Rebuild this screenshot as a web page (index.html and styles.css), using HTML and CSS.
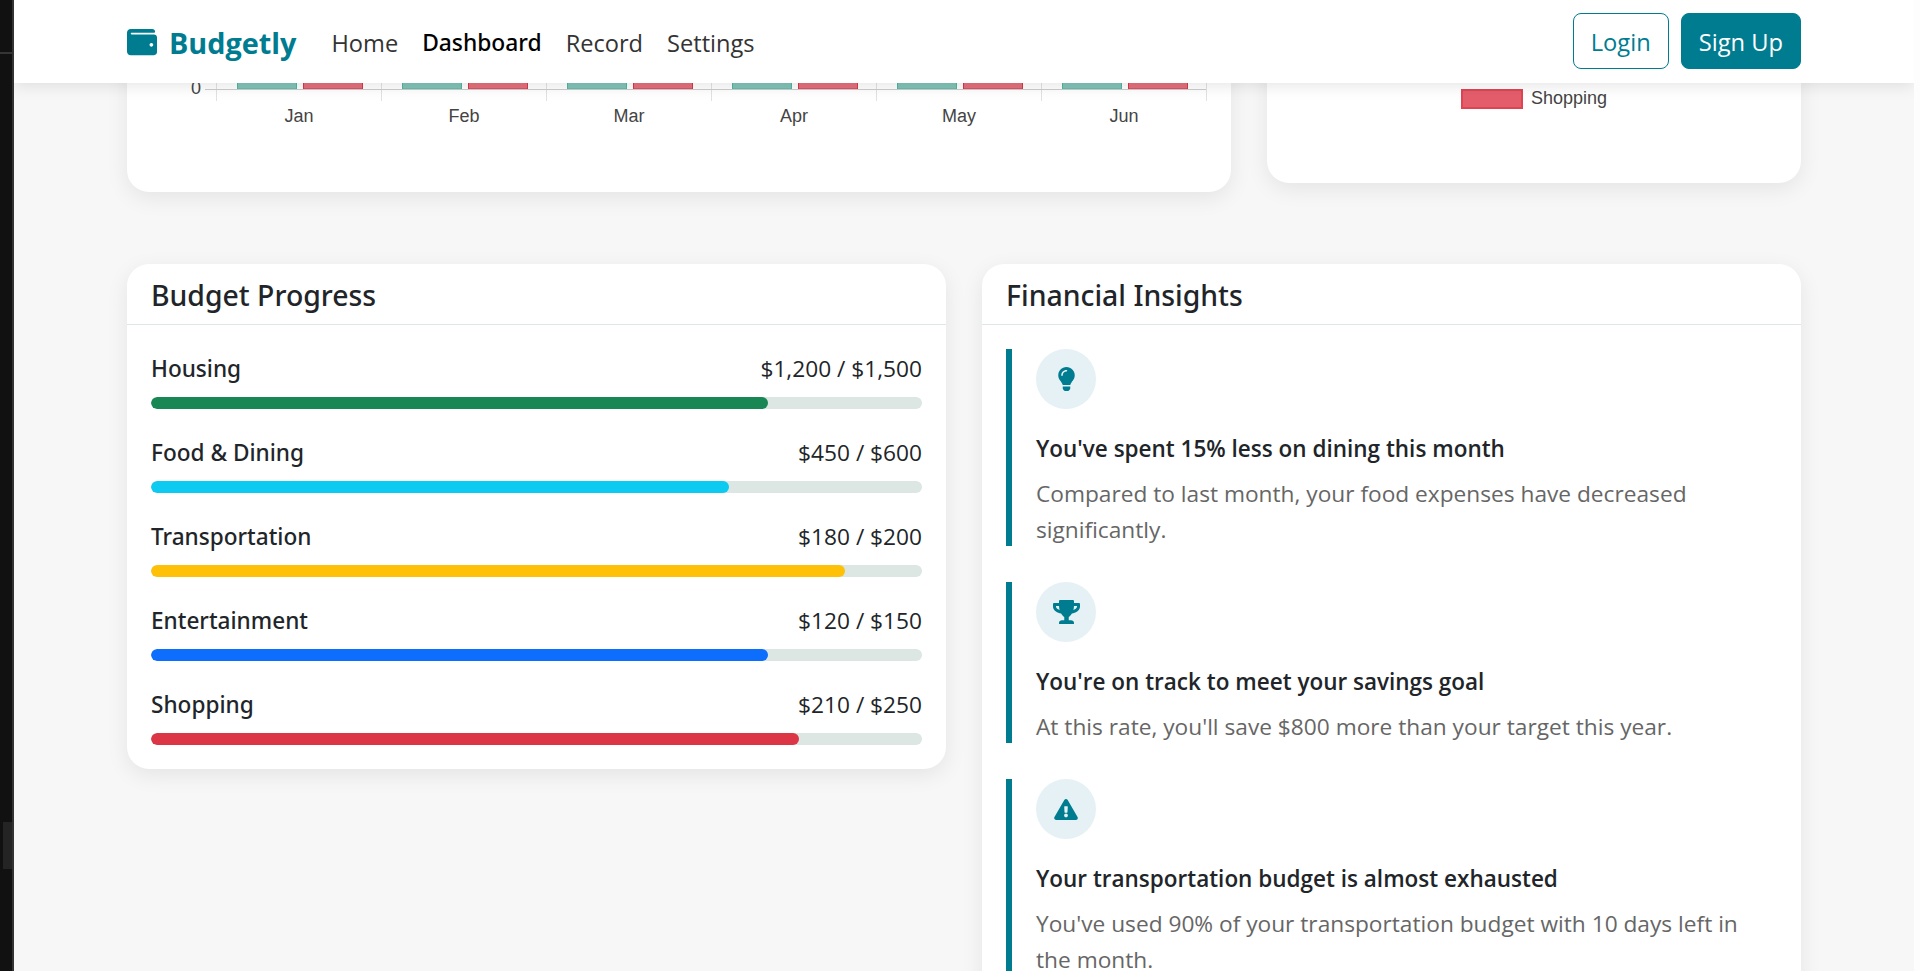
FILE: index.html
```html
<!DOCTYPE html>
<html lang="en">
<head>
    <meta charset="UTF-8">
    <meta name="viewport" content="width=device-width, initial-scale=1.0">
    <title>Budgetly - Dashboard</title>
    <link rel="stylesheet" href="styles.css">
</head>
<body>
    <div class="side-strip"></div>
    <div class="page">
        <nav class="navbar">
            <a class="brand" href="#">
                <svg class="brand-icon" viewBox="0 0 512 512"><path d="M461.2 128H80c-8.84 0-16-7.16-16-16s7.16-16 16-16h384c8.84 0 16-7.16 16-16 0-26.51-21.49-48-48-48H64C28.65 32 0 60.65 0 96v320c0 35.35 28.65 64 64 64h397.2c28.02 0 50.8-21.53 50.8-48V176c0-26.47-22.78-48-50.8-48zM416 336c-17.67 0-32-14.33-32-32s14.33-32 32-32 32 14.33 32 32-14.33 32-32 32z"/></svg>
                <span class="brand-name">Budgetly</span>
            </a>
            <div class="nav-links">
                <a href="#">Home</a>
                <a href="#" class="active">Dashboard</a>
                <a href="#">Record</a>
                <a href="#">Settings</a>
            </div>
            <div class="nav-buttons">
                <a href="#" class="btn btn-outline">Login</a>
                <a href="#" class="btn btn-solid">Sign Up</a>
            </div>
        </nav>

        <main class="content">
            <div class="chart-row">
                <section class="card chart-card">
                    <svg class="bar-chart" viewBox="0 0 1104 112" width="1104" height="112">
                        <g class="grid">
                            <path d="M89.5 0V21M254.5 0V21M419.5 0V21M584.5 0V21M749.5 0V21M914.5 0V21M1079.5 0V21"/>
                        </g>
                        <g class="bars-income">
                            <rect x="110.5" y="0" width="59" height="9"/>
                            <rect x="275.5" y="0" width="59" height="9"/>
                            <rect x="440.5" y="0" width="59" height="9"/>
                            <rect x="605.5" y="0" width="59" height="9"/>
                            <rect x="770.5" y="0" width="59" height="9"/>
                            <rect x="935.5" y="0" width="59" height="9"/>
                        </g>
                        <g class="bars-expense">
                            <rect x="176.5" y="0" width="59" height="9"/>
                            <rect x="341.5" y="0" width="59" height="9"/>
                            <rect x="506.5" y="0" width="59" height="9"/>
                            <rect x="671.5" y="0" width="59" height="9"/>
                            <rect x="836.5" y="0" width="59" height="9"/>
                            <rect x="1001.5" y="0" width="59" height="9"/>
                        </g>
                        <path class="axis" d="M78 9.5H1079"/>
                        <text class="axis-zero" x="74" y="14">0</text>
                        <g class="months">
                            <text x="172" y="42">Jan</text>
                            <text x="337" y="42">Feb</text>
                            <text x="502" y="42">Mar</text>
                            <text x="667" y="42">Apr</text>
                            <text x="832" y="42">May</text>
                            <text x="997" y="42">Jun</text>
                        </g>
                    </svg>
                </section>
                <section class="card legend-card">
                    <div class="legend-item">
                        <span class="legend-swatch"></span>
                        <span class="legend-label">Shopping</span>
                    </div>
                </section>
            </div>

            <div class="detail-row">
                <section class="card">
                    <h5 class="card-header">Budget Progress</h5>
                    <div class="card-body">
                        <div class="budget-item">
                            <div class="budget-label"><span class="budget-name">Housing</span><span>$1,200 / $1,500</span></div>
                            <div class="progress"><div class="progress-bar bar-green" style="width: 80%"></div></div>
                        </div>
                        <div class="budget-item">
                            <div class="budget-label"><span class="budget-name">Food &amp; Dining</span><span>$450 / $600</span></div>
                            <div class="progress"><div class="progress-bar bar-cyan" style="width: 75%"></div></div>
                        </div>
                        <div class="budget-item">
                            <div class="budget-label"><span class="budget-name">Transportation</span><span>$180 / $200</span></div>
                            <div class="progress"><div class="progress-bar bar-yellow" style="width: 90%"></div></div>
                        </div>
                        <div class="budget-item">
                            <div class="budget-label"><span class="budget-name">Entertainment</span><span>$120 / $150</span></div>
                            <div class="progress"><div class="progress-bar bar-blue" style="width: 80%"></div></div>
                        </div>
                        <div class="budget-item">
                            <div class="budget-label"><span class="budget-name">Shopping</span><span>$210 / $250</span></div>
                            <div class="progress"><div class="progress-bar bar-red" style="width: 84%"></div></div>
                        </div>
                    </div>
                </section>

                <section class="card">
                    <h5 class="card-header">Financial Insights</h5>
                    <div class="card-body">
                        <div class="insight">
                            <div class="insight-icon">
                                <svg class="icon-bulb" viewBox="0 0 352 512"><path d="M96.06 454.35c.01 6.29 1.87 12.45 5.36 17.69l17.09 25.69a31.99 31.99 0 0 0 26.64 14.28h61.71a31.99 31.99 0 0 0 26.64-14.28l17.09-25.69a31.989 31.989 0 0 0 5.36-17.69l.04-38.35H96.01l.05 38.35zM0 176c0 44.37 16.45 84.85 43.56 115.78 16.52 18.85 42.36 58.23 52.21 91.45.04.26.07.52.11.78h160.24c.04-.26.07-.51.11-.78 9.85-33.22 35.69-72.6 52.21-91.45C335.55 260.85 352 220.37 352 176 352 78.61 272.91-.3 175.45 0 73.44.31 0 82.97 0 176zm176-80c-44.11 0-80 35.89-80 80 0 8.84-7.16 16-16 16s-16-7.16-16-16c0-61.76 50.24-112 112-112 8.84 0 16 7.16 16 16s-7.16 16-16 16z"/></svg>
                            </div>
                            <h6 class="insight-title">You've spent 15% less on dining this month</h6>
                            <p class="insight-text">Compared to last month, your food expenses have decreased significantly.</p>
                        </div>
                        <div class="insight">
                            <div class="insight-icon">
                                <svg class="icon-trophy" viewBox="0 0 576 512"><path d="M552 64H448V24c0-13.3-10.7-24-24-24H152c-13.3 0-24 10.7-24 24v40H24C10.7 64 0 74.7 0 88v56c0 35.7 22.5 72.4 61.9 100.7 31.5 22.7 69.8 37.1 110 41.7C203.3 338.5 240 360 240 360v72h-48c-35.3 0-64 20.7-64 56v12c0 6.6 5.4 12 12 12h296c6.6 0 12-5.4 12-12v-12c0-35.3-28.7-56-64-56h-48v-72s36.7-21.5 68.1-73.6c40.3-4.6 78.6-19 110-41.7 39.3-28.3 61.9-65 61.9-100.7V88c0-13.3-10.7-24-24-24zM99.3 192.8C74.9 175.2 64 155.6 64 144v-16h64.2c1 32.6 5.8 61.2 12.8 86.2-15.1-5.2-29.2-12.4-41.7-21.4zM512 144c0 16.1-17.7 36.1-35.3 48.8-12.5 9-26.7 16.2-41.8 21.4 7-25 11.8-53.6 12.8-86.2H512v16z"/></svg>
                            </div>
                            <h6 class="insight-title">You're on track to meet your savings goal</h6>
                            <p class="insight-text">At this rate, you'll save $800 more than your target this year.</p>
                        </div>
                        <div class="insight">
                            <div class="insight-icon">
                                <svg class="icon-warning" viewBox="0 0 576 512"><path d="M569.517 440.013C587.975 472.007 564.806 512 527.94 512H48.054c-36.937 0-59.999-40.055-41.577-71.987L246.423 23.985c18.467-32.009 64.72-31.951 83.154 0l239.94 416.028zM288 354c-25.405 0-46 20.595-46 46s20.595 46 46 46 46-20.595 46-46-20.595-46-46-46zm-43.673-165.346l7.418 136c.347 6.364 5.609 11.346 11.982 11.346h48.546c6.373 0 11.635-4.982 11.982-11.346l7.418-136c.375-6.874-5.098-12.654-11.982-12.654h-63.383c-6.884 0-12.356 5.78-11.981 12.654z"/></svg>
                            </div>
                            <h6 class="insight-title">Your transportation budget is almost exhausted</h6>
                            <p class="insight-text">You've used 90% of your transportation budget with 10 days left in the month.</p>
                        </div>
                    </div>
                </section>
            </div>
        </main>
    </div>
</body>
</html>
```
FILE: styles.css
```css
* {
    box-sizing: border-box;
}
html, body {
    height: 100%;
}
body {
    margin: 0;
    display: flex;
    overflow: hidden;
    background-color: #fdfdfd;
    color: #212529;
    font-family: "Open Sans", "Noto Sans", sans-serif;
    font-size: 22.7px;
    line-height: 36px;
}
a {
    text-decoration: none;
}

/* Bit of the dark window behind the browser */
.side-strip {
    flex: 0 0 14px;
    background:
        linear-gradient(#353535, #353535) 0 52px / 100% 2px no-repeat,
        linear-gradient(#242424, #242424) 3px 822px / 9px 47px no-repeat,
        #111;
    border-right: 2px solid #333;
}
.page {
    position: relative;
    flex: 0 0 1900px;
    overflow: hidden;
    background-color: #f7f7f7;
}

/* Navbar stays on top of the scrolled content */
.navbar {
    position: absolute;
    top: 0;
    left: 0;
    right: 0;
    z-index: 10;
    height: 83px;
    padding: 0 113px;
    display: flex;
    align-items: center;
    background-color: #fff;
    box-shadow: 0 3px 15px rgba(0, 0, 0, 0.1);
}
.brand {
    display: flex;
    align-items: center;
    gap: 12px;
    color: #007c91;
    font-size: 28.8px;
    font-weight: 700;
}
.brand-name {
    padding-top: 2px;
}
.brand-icon {
    width: 30px;
    height: 30px;
    fill: #007c91;
}
.nav-links {
    display: flex;
    gap: 24px;
    margin-left: 35px;
    padding-top: 2px;
    font-size: 23.6px;
}
.nav-links a {
    color: #333;
}
.nav-links a.active {
    color: #000;
    font-family: "Noto Sans", sans-serif;
    font-size: 22.8px;
    font-weight: 500;
}
.nav-buttons {
    display: flex;
    gap: 12px;
    margin-left: auto;
    margin-bottom: 1px;
}
.btn {
    height: 56px;
    padding: 2px 17px 0;
    display: flex;
    align-items: center;
    border: 1.5px solid #007c91;
    border-radius: 8px;
    font-size: 23.7px;
}
.btn-outline {
    color: #007c91;
}
.btn-solid {
    background-color: #007c91;
    color: #fff;
}

/* Scrolled content, the top of the chart row is behind the navbar */
.content {
    margin-top: -108px;
    padding: 0 113px;
}
.card {
    background-color: #fff;
    border-radius: 22px;
    box-shadow: 0 6px 22px rgba(0, 0, 0, 0.08);
}
.chart-row {
    display: flex;
    align-items: flex-start;
    gap: 36px;
}
.chart-card {
    flex: 0 0 1104px;
    height: 300px;
    display: flex;
    flex-direction: column;
    justify-content: flex-end;
}
.bar-chart {
    display: block;
}
.bar-chart text {
    font-family: "Liberation Sans", Arial, sans-serif;
    font-size: 18px;
    fill: #444;
}
.grid path {
    stroke: #e2e2e2;
    fill: none;
}
.bars-income rect {
    fill: #80c4b7;
    stroke: #4db6a2;
}
.bars-expense rect {
    fill: #e56f7c;
    stroke: #dc3545;
}
.axis {
    stroke: #ccc;
    fill: none;
}
.axis-zero {
    text-anchor: end;
}
.months text {
    text-anchor: middle;
}

.legend-card {
    flex: 1;
    height: 291px;
    padding-bottom: 74px;
    display: flex;
    justify-content: center;
    align-items: flex-end;
}
.legend-item {
    display: flex;
    align-items: center;
    gap: 8px;
    height: 20px;
}
.legend-swatch {
    width: 62px;
    height: 20px;
    background-color: #e45d6b;
    border: 2px solid #de4553;
}
.legend-label {
    margin-top: -2px;
    font-family: "Liberation Sans", Arial, sans-serif;
    font-size: 18px;
    color: #444;
}

.detail-row {
    margin-top: 72px;
    display: grid;
    grid-template-columns: 1fr 1fr;
    align-items: start;
    gap: 36px;
}
.card-header {
    margin: 0;
    height: 61px;
    padding: 2px 24px 0;
    display: flex;
    align-items: center;
    border-bottom: 1.5px solid #dfe7e5;
    font-family: "Noto Sans", sans-serif;
    font-size: 28.4px;
    font-weight: 500;
}
.card-body {
    padding: 24px;
}

.budget-item {
    margin-bottom: 24px;
}
.budget-item:last-child {
    margin-bottom: 0;
}
.budget-label {
    display: flex;
    justify-content: space-between;
    padding-top: 2px;
    margin-bottom: 10px;
}
.budget-name {
    font-family: "Noto Sans", sans-serif;
    font-size: 22.6px;
    font-weight: 500;
}
.progress {
    height: 12px;
    background-color: #dce6e2;
    border-radius: 6px;
    overflow: hidden;
}
.progress-bar {
    height: 100%;
    border-radius: 6px;
}
.bar-green { background-color: #198754; }
.bar-cyan { background-color: #0dcaf0; }
.bar-yellow { background-color: #ffc107; }
.bar-blue { background-color: #0d6efd; }
.bar-red { background-color: #dc3545; }

.insight {
    display: flex;
    flex-direction: column;
    margin-bottom: 36px;
    padding-left: 24px;
    border-left: 6px solid #007c91;
}
.insight-icon {
    width: 60px;
    height: 60px;
    margin-bottom: 21.5px;
    display: flex;
    align-items: center;
    justify-content: center;
    background-color: #e5f1f4;
    border-radius: 50%;
}
.insight-icon svg {
    fill: #007c91;
}
.icon-bulb {
    width: 17px;
    height: 24px;
}
.icon-trophy {
    width: 27px;
    height: 24px;
}
.icon-warning {
    width: 24px;
    height: 21px;
}
.insight-title {
    margin: 0 0 9.5px;
    font-size: 22.5px;
    font-weight: 600;
    line-height: 36px;
}
.insight-text {
    margin: 0 0 -2px;
    color: #666;
}
```
